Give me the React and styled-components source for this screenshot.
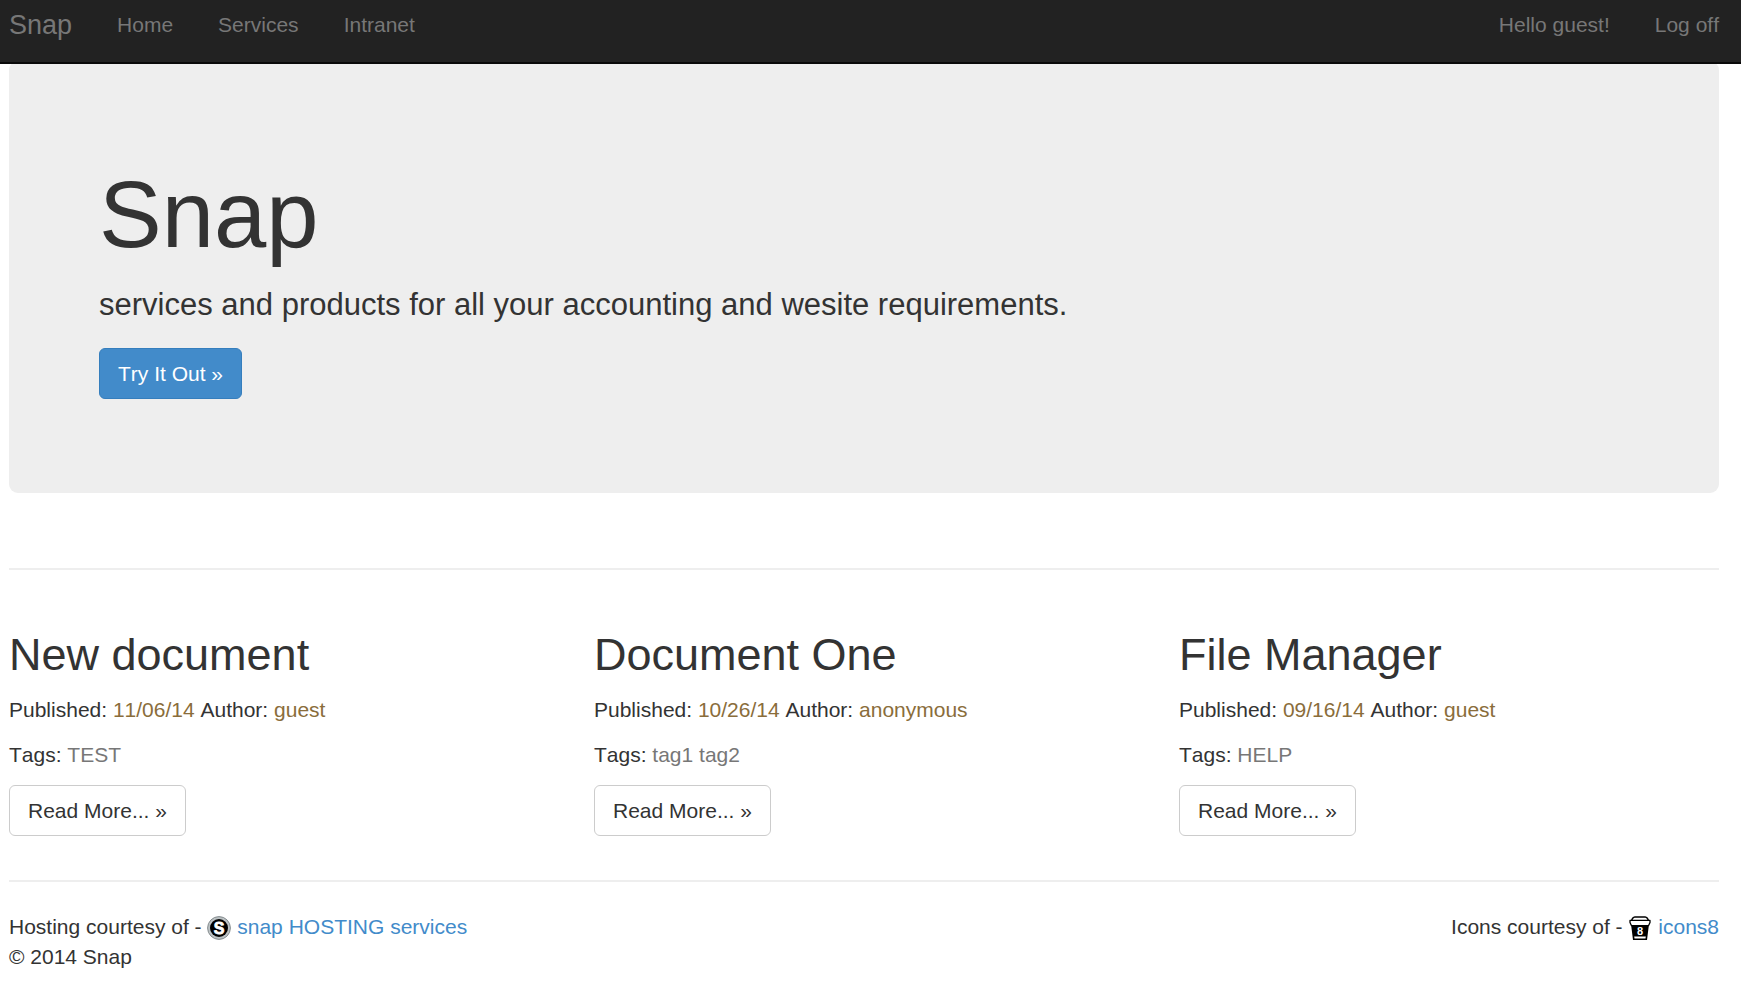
import React from 'react';
import styled, { createGlobalStyle } from 'styled-components';

const GlobalStyle = createGlobalStyle`
    * {
        box-sizing: border-box;
    }
    body {
        margin: 0;
        background: #fff;
        color: #333;
        font-family: Arial, "Liberation Sans", sans-serif;
        font-size: 21px;
        font-kerning: none;
        line-height: 30px;
    }
`

const Navbar = styled.header`
    position: fixed;
    top: 0;
    left: 0;
    right: 0;
    z-index: 10;
    display: flex;
    align-items: flex-start;
    height: 64px;
    padding: 10px 22px 0 9px;
    background: #222;
    border-bottom: 2px solid #090909;
`

const NavLink = styled.a`
    color: #777;
    text-decoration: none;
    font-size: ${props => props.$brand ? '27px' : '21px'};

    &:hover {
        color: #fff;
    }
`

const NavGroup = styled.nav`
    display: flex;
    gap: 45px;
    margin-left: ${props => props.$right ? 'auto' : '45px'};
`

const Page = styled.div`
    padding: 61px 22px 0 9px;
`

const Jumbotron = styled.section`
    padding: 102px 90px 94px;
    background: #eee;
    border-radius: 9px;
`

const Title = styled.h1`
    margin: 0 0 16px;
    font-size: 94px;
    font-weight: 400;
    line-height: 103px;
`

const Lead = styled.p`
    margin: 0 0 21px;
    font-size: 31px;
    line-height: 45px;
`

const Button = styled.a`
    display: inline-block;
    padding: 10px 18px 9px;
    border: 1px solid ${props => props.$primary ? '#357ebd' : '#ccc'};
    border-radius: 6px;
    background: ${props => props.$primary ? '#428bca' : '#fff'};
    color: ${props => props.$primary ? '#fff' : '#333'};
    text-decoration: none;
    vertical-align: top;
`

const Divider = styled.hr`
    height: 2px;
    margin: ${props => props.$wide ? '75px 0 60px' : '44px 0 30px'};
    border: 0;
    background: #eee;
`

const Documents = styled.main`
    display: grid;
    grid-template-columns: repeat(3, 1fr);
    gap: 45px;
`

const Heading = styled.h2`
    margin: 0 0 15px;
    font-size: 45px;
    font-weight: 400;
    line-height: 50px;
`

const Line = styled.p`
    margin: 0 0 15px;
`

const Warning = styled.span`
    color: #8a6d3b;
`

const Muted = styled.span`
    color: #777;
`

const Footer = styled.footer`
    display: flex;
    justify-content: space-between;
`

const FooterText = styled.p`
    margin: 0;
`

const Link = styled.a`
    color: #428bca;
    text-decoration: none;
`

const Icon = styled.svg`
    width: 24px;
    height: 24px;
    vertical-align: middle;
`

const SnapIcon = () => (
    <Icon viewBox="0 0 24 24" aria-hidden="true">
        <circle cx="12" cy="12" r="11.4" fill="#bcc2c4" stroke="#858c8f" strokeWidth="1"/>
        <circle cx="12" cy="12" r="9" fill="#000"/>
        <text x="12" y="17.8" textAnchor="middle" fontSize="16" fontWeight="700" fill="#fff" stroke="#fff" strokeWidth="0.8">S</text>
    </Icon>
)

const CupIcon = () => (
    <Icon viewBox="0 0 24 24" aria-hidden="true">
        <path d="M3.6 4L5.2 1.6L7 0.9H17L18.8 1.6L20.4 4" fill="#fff" stroke="#000" strokeWidth="1.5" strokeLinejoin="round"/>
        <path d="M2 4.4H22V6.6L20.6 9.6H3.4L2 6.6Z" fill="#fff" stroke="#000" strokeWidth="1.3" strokeLinejoin="round"/>
        <path d="M3.2 9.4H20.8L19 24H5Z" fill="#000"/>
        <path d="M6.2 20.4H17.8L17.5 22.4H6.5Z" fill="#fff"/>
        <text x="12" y="18.8" textAnchor="middle" fontSize="11" fontWeight="700" fill="#fff">8</text>
    </Icon>
)

const documents = [
    { title: 'New document', published: '11/06/14', author: 'guest', tags: 'TEST' },
    { title: 'Document One', published: '10/26/14', author: 'anonymous', tags: 'tag1 tag2' },
    { title: 'File Manager', published: '09/16/14', author: 'guest', tags: 'HELP' },
]

const Document = ({ title, published, author, tags }) => (
    <article>
        <Heading>{title}</Heading>
        <Line>Published: <Warning>{published}</Warning> Author: <Warning>{author}</Warning></Line>
        <Line>Tags: <Muted>{tags}</Muted></Line>
        <Button href="#">Read More... »</Button>
    </article>
)

const App = () => (
    <>
        <GlobalStyle/>
        <Navbar>
            <NavLink $brand href="#">Snap</NavLink>
            <NavGroup>
                <NavLink href="#">Home</NavLink>
                <NavLink href="#">Services</NavLink>
                <NavLink href="#">Intranet</NavLink>
            </NavGroup>
            <NavGroup $right>
                <NavLink href="#">Hello guest!</NavLink>
                <NavLink href="#">Log off</NavLink>
            </NavGroup>
        </Navbar>
        <Page>
            <Jumbotron>
                <Title>Snap</Title>
                <Lead>services and products for all your accounting and wesite requirements.</Lead>
                <Button $primary href="#">Try It Out »</Button>
            </Jumbotron>
            <Divider $wide/>
            <Documents>
                {documents.map(doc => <Document key={doc.title} {...doc}/>)}
            </Documents>
            <Divider/>
            <Footer>
                <div>
                    <FooterText>Hosting courtesy of - <SnapIcon/> <Link href="#">snap HOSTING services</Link></FooterText>
                    <FooterText>© 2014 Snap</FooterText>
                </div>
                <FooterText>Icons courtesy of - <CupIcon/> <Link href="#">icons8</Link></FooterText>
            </Footer>
        </Page>
    </>
)

export default App;
